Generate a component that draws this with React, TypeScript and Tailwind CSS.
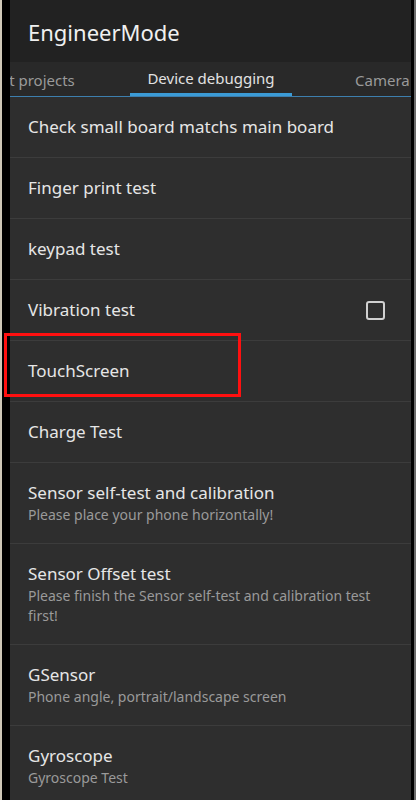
import React from "react";

type Item = { title: string; sub?: string; check?: boolean };

const items: Item[] = [
  { title: "Check small board matchs main board" },
  { title: "Finger print test" },
  { title: "keypad test" },
  { title: "Vibration test", check: true },
  { title: "TouchScreen" },
  { title: "Charge Test" },
  { title: "Sensor self-test and calibration", sub: "Please place your phone horizontally!" },
  { title: "Sensor Offset test", sub: "Please finish the Sensor self-test and calibration test first!" },
  { title: "GSensor", sub: "Phone angle, portrait/landscape screen" },
  { title: "Gyroscope", sub: "Gyroscope Test" },
];

function Row({ item }: { item: Item }) {
  return (
    <div
      className={`shrink-0 flex items-center justify-between border-b border-[#3c3c3c] pl-[18px] pr-[26px] ${
        item.sub ? "min-h-[81px] py-[18px]" : "h-[61px]"
      }`}
    >
      <div className="flex flex-col">
        <span className="text-[17px] leading-[24px] text-[#e6e6e6]">{item.title}</span>
        {item.sub && (
          <span className="text-[14px] leading-[20px] text-[#9a9a9a] pr-[10px]">{item.sub}</span>
        )}
      </div>
      {item.check && (
        <span className="block w-[19px] h-[19px] rounded-[3px] border-2 border-[#d0d0d0]" />
      )}
    </div>
  );
}

export default function App() {
  return (
    <div
      className="relative flex w-[416px] h-[800px] overflow-hidden bg-black"
      style={{ fontFamily: "'Noto Sans', 'Open Sans', sans-serif" }}
    >
      <div className="w-[2px] shrink-0 bg-[#cfc8b8]" />
      <div className="w-[8px] shrink-0 bg-black" />
      <div className="flex-1 flex flex-col bg-[#2e2e2e] overflow-hidden">
        <div className="shrink-0 h-[62px] bg-[#222222] flex items-center pl-[18px] pt-[2px]">
          <span className="text-[22px] text-[#f0f0f0]">EngineerMode</span>
        </div>
        <div className="shrink-0 relative h-[35px] bg-[#292929] border-b border-[#3d7fae] overflow-hidden">
          <div className="flex h-full -ml-[95px] whitespace-nowrap text-[15px]">
            <div className="shrink-0 w-[215px] flex items-center justify-center pl-[16px] pt-[2px] text-[#9a9a9a]">
              Test projects
            </div>
            <div className="shrink-0 w-[162px] flex items-center justify-center pt-[2px] text-[#e2e2e2] border-b-[3px] border-[#3b9bd6]">
              Device debugging
            </div>
            <div className="shrink-0 w-[162px] flex items-center pl-[63px] pt-[2px] text-[#9a9a9a]">
              Camera
            </div>
          </div>
        </div>
        <div className="flex flex-col">
          {items.map((it) => (
            <Row key={it.title} item={it} />
          ))}
        </div>
      </div>
      <div className="w-[3px] shrink-0 bg-black" />
      <div className="w-[2px] shrink-0 bg-[#6a6a6a]" />
      <div className="absolute left-[4px] top-[333px] w-[237px] h-[64px] border-[3px] border-[#ff1010]" />
    </div>
  );
}
